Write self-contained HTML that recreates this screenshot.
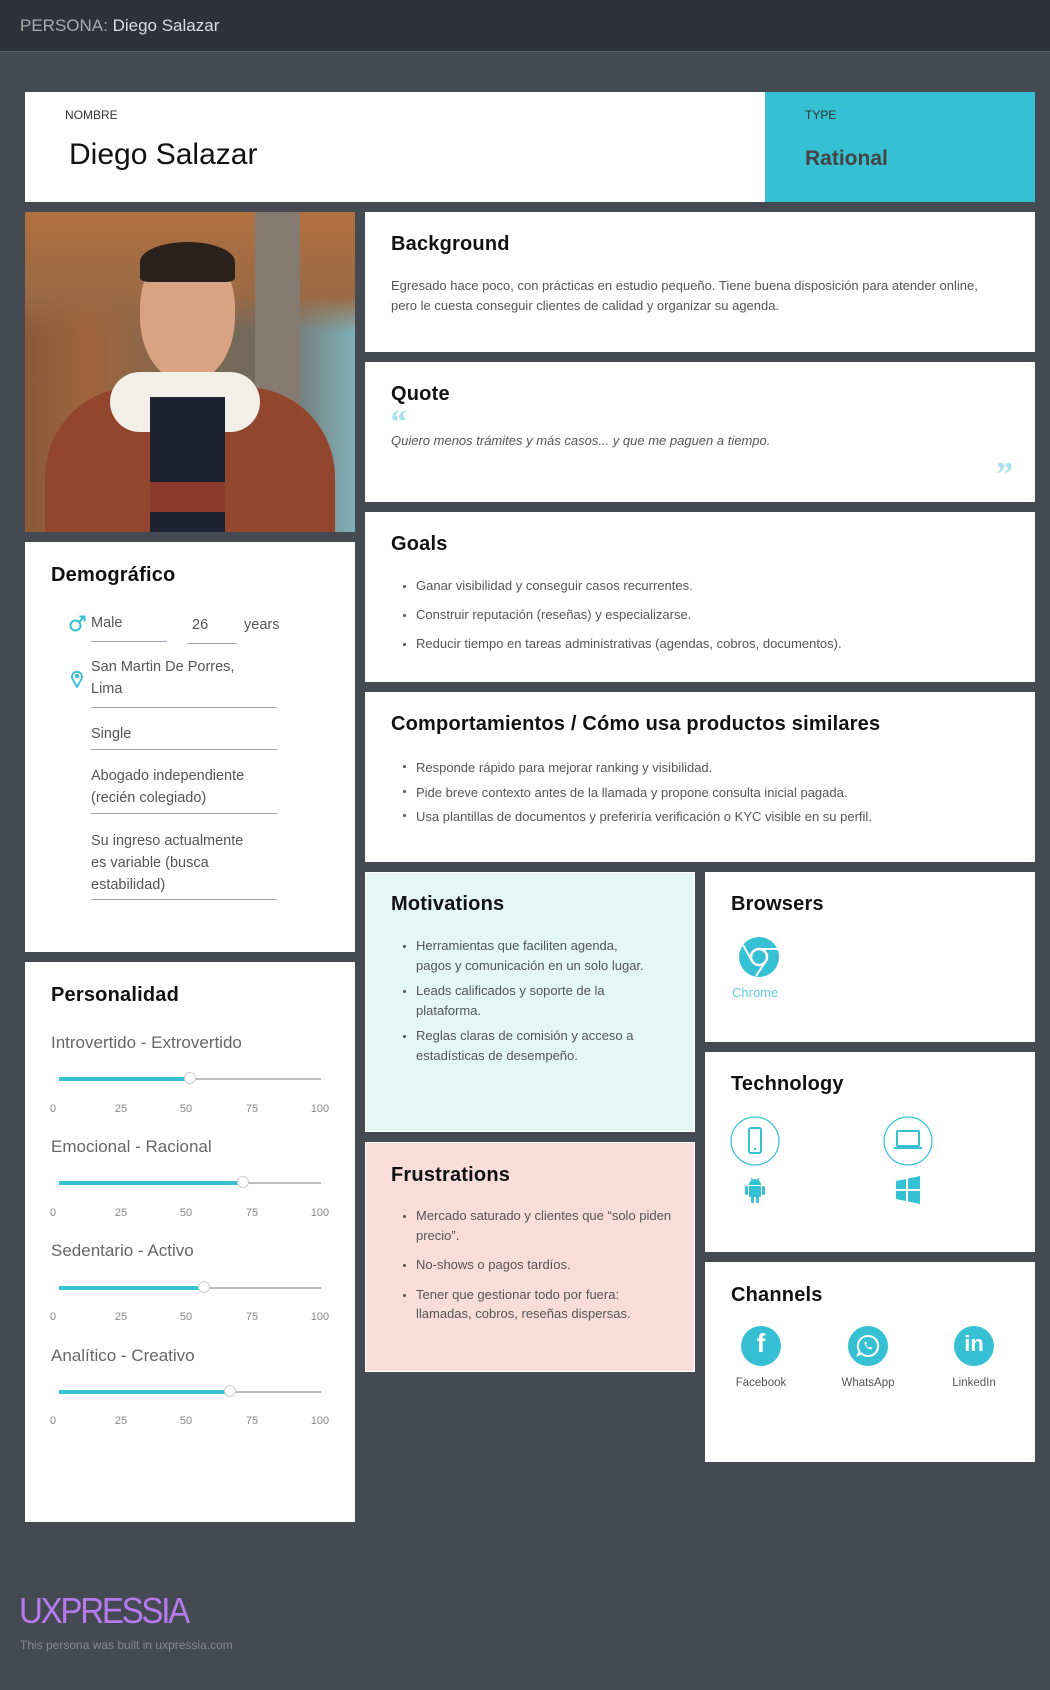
<!DOCTYPE html>
<html><head><meta charset="utf-8"><style>
*{margin:0;padding:0;box-sizing:border-box}
body{width:1050px;height:1690px;background:#454951;font-family:"Liberation Sans",sans-serif;position:relative;overflow:hidden;color:#555}
.a{position:absolute}
.card{position:absolute;background:#fff}
.t{position:absolute;font-size:20px;color:#111;font-weight:bold;letter-spacing:.2px}
.p{position:absolute;font-size:13px;color:#555;line-height:20px}
ul{position:absolute;list-style:none;font-size:13px;color:#555}
ul li{position:relative;padding-left:26px}
ul li:before{content:"";position:absolute;left:13px;top:9px;width:3px;height:3px;border-radius:50%;background:#555}
.d{position:absolute;font-size:14.5px;color:#555;line-height:22px}
.u{position:absolute;height:1px;background:#9aa3ae}
.sl{position:absolute;font-size:17px;color:#666}
.tr{position:absolute;left:59px;width:262px;height:2px;background:#bbb}
.fl{position:absolute;left:0;top:-1px;height:4px;background:#35c1d3}
.kn{position:absolute;top:-6px;width:12px;height:12px;margin-left:-6px;border-radius:50%;background:#fff;border:1px solid #ccc}
.tk{position:absolute;font-size:11px;color:#888;width:30px;text-align:center;margin-left:-15px}
.ic{position:absolute;border-radius:50%;background:#35c1d3}
.cl{position:absolute;font-size:11.5px;color:#555;width:80px;text-align:center;margin-left:-40px}
</style></head><body>
<div class="a" style="left:0;top:0;width:1050px;height:52px;background:#2f323a;border-bottom:1px solid #565a63"></div>
<div class="a" style="left:20px;top:16px;font-size:17px;color:#ddd"><span style="color:#aaa">PERSONA:</span> Diego Salazar</div>

<div class="card" style="left:25px;top:92px;width:740px;height:110px"></div>
<div class="a" style="left:65px;top:108px;font-size:12px;color:#333">NOMBRE</div>
<div class="a" style="left:69px;top:138px;font-size:30px;color:#111">Diego Salazar</div>
<div class="a" style="left:765px;top:92px;width:270px;height:110px;background:#35c1d3"></div>
<div class="a" style="left:805px;top:108px;font-size:12px;color:#333">TYPE</div>
<div class="a" style="left:805px;top:147px;font-size:21px;color:#444;font-weight:bold">Rational</div>

<!-- photo -->
<div class="a" style="left:25px;top:212px;width:330px;height:320px;overflow:hidden;background:linear-gradient(90deg,#8a5a3a 0%,#a0643e 20%,#7d6850 50%,#6f6a62 75%,#7fb0b8 100%)">
<div class="a" style="left:0;top:0;width:330px;height:120px;background:linear-gradient(180deg,#b07040,#9a6a44 70%,transparent)"></div>
<div class="a" style="left:230px;top:0;width:45px;height:320px;background:#857a70"></div>
<div class="a" style="left:115px;top:35px;width:95px;height:135px;border-radius:45% 45% 48% 48%;background:#d9a283"></div>
<div class="a" style="left:115px;top:30px;width:95px;height:40px;border-radius:50% 50% 10% 10%;background:#2b211c"></div>
<div class="a" style="left:20px;top:175px;width:290px;height:170px;border-radius:90px 90px 0 0;background:#93462e"></div>
<div class="a" style="left:85px;top:160px;width:150px;height:60px;border-radius:40px;background:#f2eee8"></div>
<div class="a" style="left:125px;top:185px;width:75px;height:140px;background:#1e2230"></div>
<div class="a" style="left:125px;top:270px;width:75px;height:30px;background:#8a3a2a"></div>
</div>

<div class="card" style="left:365px;top:212px;width:670px;height:140px"></div>
<div class="t" style="left:391px;top:233px">Background</div>
<div class="p" style="left:391px;top:276px;width:590px">Egresado hace poco, con prácticas en estudio pequeño. Tiene buena disposición para atender online, pero le cuesta conseguir clientes de calidad y organizar su agenda.</div>

<div class="card" style="left:365px;top:362px;width:670px;height:140px"></div>
<div class="t" style="left:391px;top:383px">Quote</div>
<div class="a" style="left:389px;top:404px;font-size:34px;color:#a6e3ec;font-style:italic;font-family:'Liberation Serif',serif;font-weight:bold">“</div>
<div class="p" style="left:391px;top:431px;font-style:italic">Quiero menos trámites y más casos... y que me paguen a tiempo.</div>
<div class="a" style="left:996px;top:456px;font-size:34px;color:#a6e3ec;font-family:'Liberation Serif',serif;font-weight:bold">”</div>

<div class="card" style="left:365px;top:512px;width:670px;height:170px"></div>
<div class="t" style="left:391px;top:533px">Goals</div>
<ul style="left:390px;top:576px;line-height:20px"><li style="margin-bottom:9px">Ganar visibilidad y conseguir casos recurrentes.</li><li style="margin-bottom:9px">Construir reputación (reseñas) y especializarse.</li><li>Reducir tiempo en tareas administrativas (agendas, cobros, documentos).</li></ul>

<div class="card" style="left:365px;top:692px;width:670px;height:170px"></div>
<div class="t" style="left:391px;top:713px">Comportamientos / Cómo usa productos similares</div>
<ul style="left:390px;top:756px;line-height:24.5px"><li>Responde rápido para mejorar ranking y visibilidad.</li><li>Pide breve contexto antes de la llamada y propone consulta inicial pagada.</li><li>Usa plantillas de documentos y preferiría verificación o KYC visible en su perfil.</li></ul>

<div class="a" style="left:365px;top:872px;width:330px;height:260px;background:#e4f7f3;border:1px solid #fff"></div>
<div class="t" style="left:391px;top:893px">Motivations</div>
<ul style="left:390px;top:936px;width:262px;line-height:19.5px"><li style="margin-bottom:6px">Herramientas que faciliten agenda, pagos y comunicación en un solo lugar.</li><li style="margin-bottom:6px">Leads calificados y soporte de la plataforma.</li><li>Reglas claras de comisión y acceso a estadísticas de desempeño.</li></ul>

<div class="a" style="left:365px;top:1142px;width:330px;height:230px;background:#f8ddd9;border:1px solid #fff"></div>
<div class="t" style="left:391px;top:1164px">Frustrations</div>
<ul style="left:390px;top:1206px;width:282px;line-height:19.5px"><li style="margin-bottom:10px">Mercado saturado y clientes que “solo piden precio”.</li><li style="margin-bottom:10px">No-shows o pagos tardíos.</li><li>Tener que gestionar todo por fuera: llamadas, cobros, reseñas dispersas.</li></ul>

<div class="card" style="left:705px;top:872px;width:330px;height:170px"></div>
<div class="t" style="left:731px;top:893px">Browsers</div>
<svg class="a" style="left:738px;top:936px" width="42" height="42" viewBox="0 0 42 42"><circle cx="21" cy="21" r="20" fill="#35c1d3"/><circle cx="21" cy="21" r="8" fill="none" stroke="#fff" stroke-width="2.5"/><path d="M21 13 H40 M14 25 L5 9 M28 25 L18 40" stroke="#fff" stroke-width="2" fill="none"/></svg>
<div class="a" style="left:732px;top:985px;font-size:13px;color:#5cd0de">Chrome</div>

<div class="card" style="left:705px;top:1052px;width:330px;height:200px"></div>
<div class="t" style="left:731px;top:1073px">Technology</div>
<svg class="a" style="left:730px;top:1116px" width="50" height="50"><circle cx="25" cy="25" r="24" fill="none" stroke="#35c1d3" stroke-width="1.2"/><rect x="19" y="12" width="12" height="25" rx="2" fill="none" stroke="#35c1d3" stroke-width="2"/><circle cx="25" cy="33" r="1.2" fill="#35c1d3"/></svg>
<svg class="a" style="left:883px;top:1116px" width="50" height="50"><circle cx="25" cy="25" r="24" fill="none" stroke="#35c1d3" stroke-width="1.2"/><rect x="14" y="15" width="22" height="15" rx="1" fill="none" stroke="#35c1d3" stroke-width="2"/><path d="M11 32 H39" stroke="#35c1d3" stroke-width="2"/></svg>
<svg class="a" style="left:743px;top:1176px" width="24" height="28" viewBox="0 0 24 28"><path d="M6 9 A6 6 0 0 1 18 9Z" fill="#35c1d3"/><rect x="6" y="10" width="12" height="11" rx="1" fill="#35c1d3"/><rect x="2" y="10" width="3" height="9" rx="1.5" fill="#35c1d3"/><rect x="19" y="10" width="3" height="9" rx="1.5" fill="#35c1d3"/><rect x="8" y="20" width="3" height="7" rx="1.5" fill="#35c1d3"/><rect x="13" y="20" width="3" height="7" rx="1.5" fill="#35c1d3"/><path d="M8 2 L10 5 M16 2 L14 5" stroke="#35c1d3" stroke-width="1.2"/></svg>
<svg class="a" style="left:895px;top:1176px" width="26" height="28" viewBox="0 0 26 28"><path d="M1 5 L11 3 V13 H1Z M13 2.6 L25 0 V13 H13Z M1 15 H11 V25 L1 23Z M13 15 H25 V28 L13 25.4Z" fill="#35c1d3"/></svg>

<div class="card" style="left:705px;top:1262px;width:330px;height:200px"></div>
<div class="t" style="left:731px;top:1284px">Channels</div>
<div class="ic" style="left:741px;top:1326px;width:40px;height:40px"></div>
<div class="a" style="left:741px;top:1328px;width:40px;text-align:center;font-size:26px;font-weight:bold;color:#fff">f</div>
<div class="ic" style="left:848px;top:1326px;width:40px;height:40px"></div>
<svg class="a" style="left:856px;top:1334px" width="24" height="24" viewBox="0 0 24 24"><path d="M12 2 A10 10 0 1 1 5.5 19.5 L2 21 L3.5 17.5 A10 10 0 0 1 12 2Z" fill="none" stroke="#fff" stroke-width="2"/><path d="M8.5 8 C8.5 12 11 15 15.5 15.5 L16 13.5 L14 12.8 L13 13.8 C11.5 13 10.5 12 10 10.5 L11 9.5 L10.3 7.5Z" fill="#fff"/></svg>
<div class="ic" style="left:954px;top:1326px;width:40px;height:40px"></div>
<div class="a" style="left:954px;top:1331px;width:40px;text-align:center;font-size:22px;font-weight:bold;color:#fff">in</div>
<div class="cl" style="left:761px;top:1377px">Facebook</div>
<div class="cl" style="left:868px;top:1377px">WhatsApp</div>
<div class="cl" style="left:974px;top:1377px">LinkedIn</div>

<!-- Demografico -->
<div class="card" style="left:25px;top:542px;width:330px;height:410px"></div>
<div class="t" style="left:51px;top:564px">Demográfico</div>
<svg class="a" style="left:69px;top:615px" width="17" height="17" viewBox="0 0 17 17"><circle cx="6.5" cy="10.5" r="5" fill="none" stroke="#35c1d3" stroke-width="2"/><path d="M10 7 L15.5 1.5 M10.5 1.5 H15.5 V6.5" fill="none" stroke="#35c1d3" stroke-width="2"/></svg>
<div class="d" style="left:91px;top:612px">Male</div><div class="u" style="left:91px;top:641px;width:76px"></div>
<div class="d" style="left:192px;top:614px">26</div><div class="u" style="left:187px;top:643px;width:50px"></div>
<div class="d" style="left:244px;top:614px">years</div>
<svg class="a" style="left:71px;top:670px" width="12" height="18" viewBox="0 0 12 18"><path d="M6 17 L1.5 9 A5 5 0 1 1 10.5 9Z" fill="none" stroke="#35c1d3" stroke-width="1.8"/><circle cx="6" cy="6" r="2" fill="#35c1d3"/></svg>
<div class="d" style="left:91px;top:656px">San Martin De Porres,<br>Lima</div><div class="u" style="left:91px;top:707px;width:186px"></div>
<div class="d" style="left:91px;top:723px">Single</div><div class="u" style="left:91px;top:749px;width:186px"></div>
<div class="d" style="left:91px;top:765px">Abogado independiente<br>(recién colegiado)</div><div class="u" style="left:91px;top:813px;width:186px"></div>
<div class="d" style="left:91px;top:830px">Su ingreso actualmente<br>es variable (busca<br>estabilidad)</div><div class="u" style="left:91px;top:899px;width:186px"></div>

<!-- Personalidad -->
<div class="card" style="left:25px;top:962px;width:330px;height:560px"></div>
<div class="t" style="left:51px;top:984px">Personalidad</div>

<div class="sl" style="left:51px;top:1033px">Introvertido - Extrovertido</div>
<div class="tr" style="top:1078px"><div class="fl" style="width:131px"></div><div class="kn" style="left:131px"></div></div>
<div class="tk" style="left:53px;top:1103px">0</div><div class="tk" style="left:121px;top:1103px">25</div><div class="tk" style="left:186px;top:1103px">50</div><div class="tk" style="left:252px;top:1103px">75</div><div class="tk" style="left:320px;top:1103px">100</div>

<div class="sl" style="left:51px;top:1137px">Emocional - Racional</div>
<div class="tr" style="top:1182px"><div class="fl" style="width:184px"></div><div class="kn" style="left:184px"></div></div>
<div class="tk" style="left:53px;top:1207px">0</div><div class="tk" style="left:121px;top:1207px">25</div><div class="tk" style="left:186px;top:1207px">50</div><div class="tk" style="left:252px;top:1207px">75</div><div class="tk" style="left:320px;top:1207px">100</div>

<div class="sl" style="left:51px;top:1241px">Sedentario - Activo</div>
<div class="tr" style="top:1287px"><div class="fl" style="width:145px"></div><div class="kn" style="left:145px"></div></div>
<div class="tk" style="left:53px;top:1311px">0</div><div class="tk" style="left:121px;top:1311px">25</div><div class="tk" style="left:186px;top:1311px">50</div><div class="tk" style="left:252px;top:1311px">75</div><div class="tk" style="left:320px;top:1311px">100</div>

<div class="sl" style="left:51px;top:1346px">Analítico - Creativo</div>
<div class="tr" style="top:1391px"><div class="fl" style="width:171px"></div><div class="kn" style="left:171px"></div></div>
<div class="tk" style="left:53px;top:1415px">0</div><div class="tk" style="left:121px;top:1415px">25</div><div class="tk" style="left:186px;top:1415px">50</div><div class="tk" style="left:252px;top:1415px">75</div><div class="tk" style="left:320px;top:1415px">100</div>

<div class="a" style="left:19px;top:1590px;font-size:36px;color:#b57bee;letter-spacing:-2.5px;transform:scaleX(.92);transform-origin:left">UXPRESSIA</div>
<div class="a" style="left:20px;top:1638px;font-size:12px;color:#888">This persona was built in uxpressia.com</div>
</body></html>
